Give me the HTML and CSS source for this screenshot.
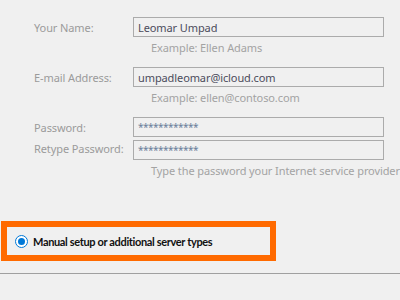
FILE: index.html
```html
<!DOCTYPE html>
<html>
<head>
  <meta charset="utf-8">
  <title>Add Account</title>
  <link rel="stylesheet" href="styles.css">
</head>
<body>
  <div class="page">
    <div class="form">
      <label class="label row-name">Your Name:</label>
      <div class="field row-name">Leomar Umpad</div>
      <div class="hint row-name-hint">Example: Ellen Adams</div>

      <label class="label row-mail">E-mail Address:</label>
      <div class="field row-mail">umpadleomar@icloud.com</div>
      <div class="hint row-mail-hint">Example: ellen@contoso.com</div>

      <label class="label row-pass">Password:</label>
      <div class="field pw row-pass">************</div>

      <label class="label row-retype">Retype Password:</label>
      <div class="field pw row-retype">************</div>
      <div class="hint row-pass-hint">Type the password your Internet service provider</div>
    </div>

    <div class="manual">
      <span class="radio"><span class="dot"></span></span>
      <span class="manual-text">Manual setup or additional server types</span>
    </div>

    <div class="divider"></div>
  </div>
</body>
</html>
```

FILE: styles.css
```css
* {
  box-sizing: border-box;
}

html, body {
  margin: 0;
  padding: 0;
  width: 400px;
  height: 300px;
  overflow: hidden;
  background: #f0f0f0;
  font-family: "Noto Sans", "Open Sans", sans-serif;
  font-size: 11px;
  letter-spacing: -0.1px;
}

.page {
  padding-top: 17px;
}

.form {
  display: grid;
  grid-template-columns: 99px 251px;
  grid-template-rows: 20px 30px 20px 30px 20px 20px 20px;
  padding-left: 34px;
  white-space: nowrap;
}

.label {
  grid-column: 1;
  color: #9b9b9b;
  display: flex;
  align-items: center;
}

.field {
  grid-column: 2;
  height: 20px;
  border: 1px solid #ababab;
  padding: 0 4px;
  color: #4c4c5c;
  font-size: 11px;
  display: flex;
  align-items: center;
}

.pw {
  color: #6a7f9a;
  letter-spacing: -0.5px;
  font-size: 10px;
}

.hint {
  grid-column: 2;
  padding-left: 18px;
  color: #a3a3a3;
  height: 16px;
  margin-top: 2px;
  display: flex;
  align-items: center;
}

.row-name { grid-row: 1; }
.row-name-hint { grid-row: 2; }
.row-mail { grid-row: 3; }
.row-mail-hint { grid-row: 4; }
.row-pass { grid-row: 5; }
.row-retype { grid-row: 6; margin-top: 3px; }
.row-pass-hint { grid-row: 7; margin-top: 5px; }

.manual {
  margin-top: 44px;
  margin-left: 1px;
  width: 275px;
  height: 40px;
  border: 6px solid #ff6a00;
  display: flex;
  align-items: center;
  padding-left: 8px;
  gap: 5px;
}

.radio {
  width: 13px;
  height: 13px;
  border-radius: 50%;
  border: 1px solid #0078d7;
  background: #fff;
  display: flex;
  align-items: center;
  justify-content: center;
}

.dot {
  width: 7px;
  height: 7px;
  border-radius: 50%;
  background: #0078d7;
}

.manual-text {
  font-family: Lato, "Noto Sans", sans-serif;
  font-weight: bold;
  font-size: 11px;
  letter-spacing: -0.35px;
  color: #111;
  white-space: nowrap;
}

.divider {
  margin-top: 12px;
  height: 1px;
  background: #a0a0a0;
}
```
